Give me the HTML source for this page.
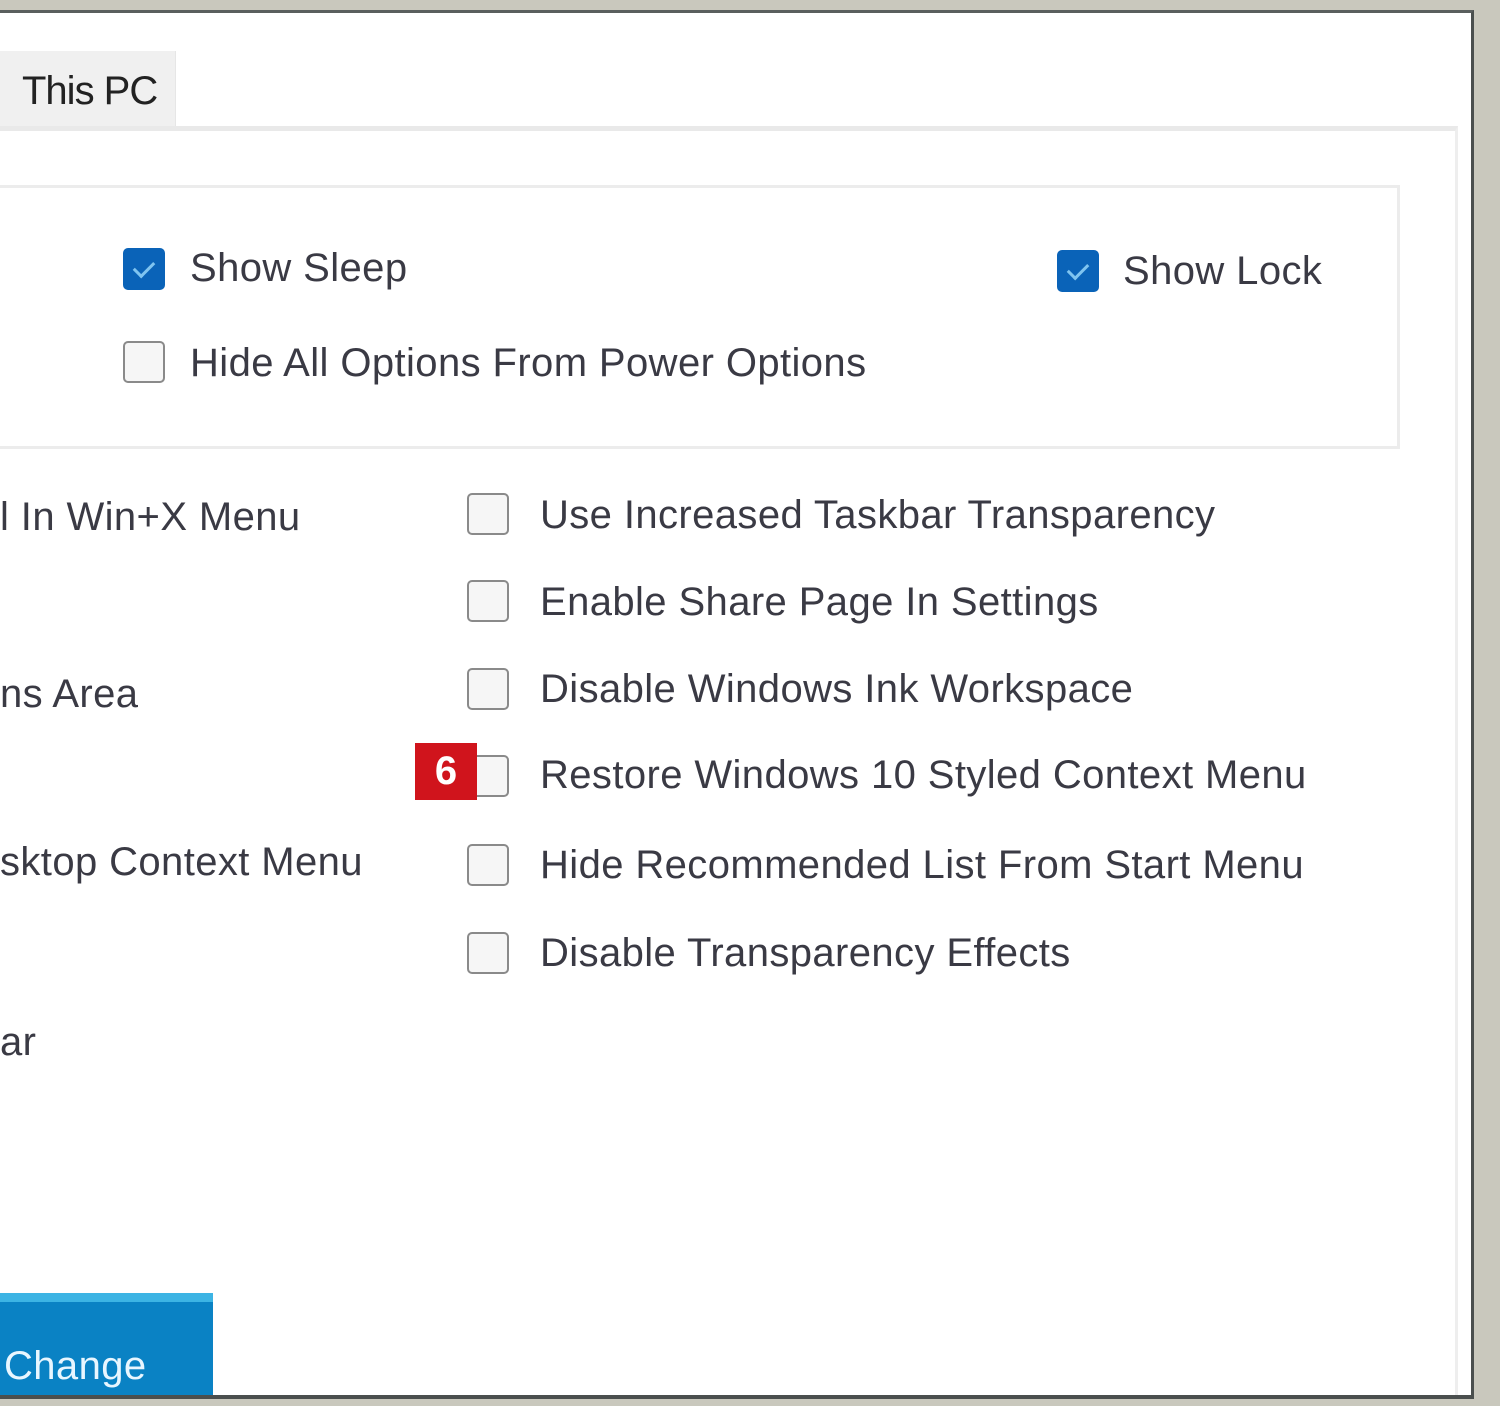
<!DOCTYPE html>
<html><head><meta charset="utf-8"><style>
html,body{margin:0;padding:0;width:1500px;height:1406px;overflow:hidden;background:#c9c8bd;font-family:"Liberation Sans",sans-serif;position:relative}
#win{position:absolute;left:0;top:10px;width:1474px;height:1389px;background:#fff;border-top:3px solid #5a5f5e;border-right:3px solid #4a4f4e;border-bottom:4px solid #4a4f4e;box-sizing:border-box;overflow:hidden}
.t{position:absolute;font-size:40px;color:#3a3a44;white-space:nowrap;letter-spacing:0.4px;line-height:1}
.cb{position:absolute;width:42px;height:42px;border:2px solid #8a8a8a;border-radius:5px;background:#f6f6f6;box-sizing:border-box}
.cb.on{background:#0a63b8;border-color:#0a63b8}
.cb.on::after{content:"";position:absolute;left:13px;top:7px;width:9px;height:17px;border:solid #7fc4f0;border-width:0 3px 3px 0;transform:rotate(45deg)}
</style></head><body>
<div id="win">
<div style="position:absolute;left:0;top:38px;width:175px;height:80px;background:#f0f0f0;border-right:1px solid #e6e6e6"></div>
<div class="t" style="left:22px;top:58px;color:#222;letter-spacing:-1px">This PC</div>
<div style="position:absolute;left:0;top:113px;width:1455px;height:1300px;border-top:5px solid #e9e9e9;border-right:3px solid #eeeeee"></div>
<div style="position:absolute;left:0;top:172px;width:1397px;height:258px;border:3px solid #ececec;border-left:none"></div>
<div class="cb on" style="left:123px;top:235px"></div><div class="t" style="left:190px;top:235px">Show Sleep</div>
<div class="cb on" style="left:1057px;top:237px"></div><div class="t" style="left:1123px;top:238px">Show Lock</div>
<div class="cb" style="left:123px;top:328px"></div><div class="t" style="left:190px;top:330px">Hide All Options From Power Options</div>

<div class="t" style="left:0;top:484px">l In Win+X Menu</div>
<div class="t" style="left:0;top:661px">ns Area</div>
<div class="t" style="left:0;top:829px">sktop Context Menu</div>
<div class="t" style="left:0;top:1009px">ar</div>

<div class="cb" style="left:467px;top:480px"></div><div class="t" style="left:540px;top:482px">Use Increased Taskbar Transparency</div>
<div class="cb" style="left:467px;top:567px"></div><div class="t" style="left:540px;top:569px">Enable Share Page In Settings</div>
<div class="cb" style="left:467px;top:655px"></div><div class="t" style="left:540px;top:656px">Disable Windows Ink Workspace</div>
<div class="cb" style="left:467px;top:742px"></div><div class="t" style="left:540px;top:742px">Restore Windows 10 Styled Context Menu</div>
<div class="cb" style="left:467px;top:831px"></div><div class="t" style="left:540px;top:832px">Hide Recommended List From Start Menu</div>
<div class="cb" style="left:467px;top:919px"></div><div class="t" style="left:540px;top:920px">Disable Transparency Effects</div>
<div style="position:absolute;left:415px;top:730px;width:62px;height:57px;background:#d0141c;color:#fff;font:bold 40px 'Liberation Sans',sans-serif;text-align:center;line-height:57px">6</div>

<div style="position:absolute;left:0;top:1280px;width:213px;height:110px;background:#0a82c4;border-top:9px solid #3cb4e4;box-sizing:border-box"></div>
<div class="t" style="left:4px;top:1333px;color:#e8f6ff">Change</div>
</div>
</body></html>
